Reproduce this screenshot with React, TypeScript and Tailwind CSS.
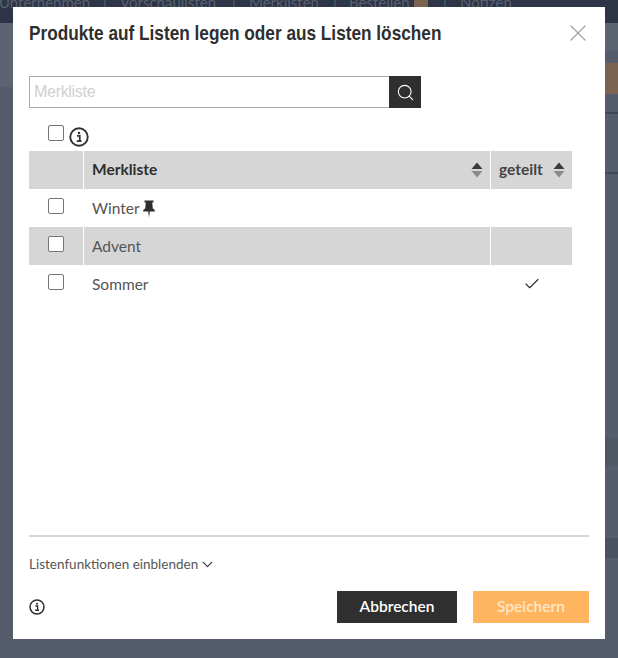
import React from "react";
import { Search, X, Check, ChevronDown } from "lucide-react";

const body = "font-['Lato','Noto_Sans',sans-serif]";

function Info({ size = 16 }: { size?: number }) {
  return (
    <svg width={size} height={size} viewBox="0 0 16 16" fill="none" className="shrink-0">
      <circle cx="8" cy="8" r="7" stroke="#2f2f2f" strokeWidth="1.5" />
      <circle cx="8" cy="4.7" r="1" fill="#2f2f2f" />
      <path d="M6.4 7h2.2v4M6.2 11.3h3.8" stroke="#2f2f2f" strokeWidth="1.4" fill="none" />
    </svg>
  );
}

function Sort() {
  return (
    <svg width="12" height="16" viewBox="0 0 12 16" className="shrink-0">
      <path d="M6 0.5L11.5 7H0.5Z" fill="#3a3a3a" />
      <path d="M6 15.5L11.5 9H0.5Z" fill="#8b8b8b" />
    </svg>
  );
}

function Pin() {
  return (
    <svg width="14" height="18" viewBox="0 0 14 18">
      <path d="M2.5 0.5H11.5V2.5H10.2L10.8 8.5C12 9.2 13 10.2 13 11.5H7.8L7 17.5L6.2 11.5H1C1 10.2 2 9.2 3.2 8.5L3.8 2.5H2.5Z" fill="#2f2f2f" />
    </svg>
  );
}

function Box() {
  return <span className="block w-4 h-4 rounded-[2px] border border-[#767676] bg-white" />;
}

function Row({ name, shaded, pin, shared }: { name: string; shaded?: boolean; pin?: boolean; shared?: boolean }) {
  const bg = shaded ? "bg-[#d6d6d6]" : "bg-white";
  return (
    <div className="flex h-[38px] w-[543px] gap-px text-[#555555] text-[15.5px]">
      <div className={`w-[54px] flex items-center justify-center pb-[5px] pr-px ${bg}`}>
        <Box />
      </div>
      <div className={`flex-1 flex items-center gap-[2px] pl-2 pt-[2px] ${bg}`}>
        <span>{name}</span>
        {pin && <Pin />}
      </div>
      <div className={`w-[81px] flex items-center justify-center ${bg}`}>
        {shared && <Check size={18} strokeWidth={1.5} className="text-[#2f2f2f]" />}
      </div>
    </div>
  );
}

export default function App() {
  return (
    <div className={`relative w-[618px] h-[658px] overflow-hidden bg-[#555c6b] pt-[7px] pl-[13px] ${body}`}>
      {/* Dimmed page behind the dialog */}
      <div className="absolute left-0 top-0 w-full h-[23px] bg-[#2d3546]" />
      <div className="absolute left-0 top-[-8px] w-full h-5 text-[#5a6170] text-[15px] leading-5 whitespace-nowrap">
        <span className="absolute left-[-1px]">Unternehmen</span>
        <span className="absolute left-[103px]">|</span>
        <span className="absolute left-[120px]">Vorschaulisten</span>
        <span className="absolute left-[232px]">|</span>
        <span className="absolute left-[249px]">Merklisten</span>
        <span className="absolute left-[333px]">|</span>
        <span className="absolute left-[349px]">Bestellen</span>
        <span className="absolute left-[443px]">|</span>
        <span className="absolute left-[460px]">Notizen</span>
      </div>
      <div className="absolute left-[414px] top-0 w-[14px] h-2 bg-[#7a644f]" />
      <div className="absolute left-0 top-[23px] w-[13px] h-[64px] bg-[#5c6371]" />
      <div className="absolute left-[605px] top-[23px] w-[13px] h-[27px] bg-[#5c6371]" />
      <div className="absolute left-[605px] top-[63px] w-[13px] h-[31px] bg-[#7a644f]" />
      <div className="absolute left-[605px] top-[112px] w-[13px] h-[2px] bg-[#3f4656]" />
      <div className="absolute left-[605px] top-[172px] w-[13px] h-[2px] bg-[#3f4656]" />
      <div className="absolute left-[605px] top-[438px] w-[13px] h-[28px] bg-[#4f5664]" />
      <div className="absolute left-[605px] top-[538px] w-[13px] h-[20px] bg-[#4a5160]" />

      {/* Dialog */}
      <div className="relative flex flex-col w-[592px] h-[632px] bg-white pl-4 pr-4">
        <div className="flex items-start justify-between pt-[12px] h-[69px]">
          <h1 className="font-['Liberation_Sans',sans-serif] font-bold text-[21px] leading-[28px] text-[#2f2f2f] whitespace-nowrap origin-left scale-x-[0.82]">
            Produkte auf Listen legen oder aus Listen löschen
          </h1>
          <X size={28} strokeWidth={1.1} className="text-[#a3a3a3] -mr-[3px] shrink-0" />
        </div>

        <div className="flex w-[392px] h-8">
          <input
            readOnly
            placeholder="Merkliste"
            className="flex-1 min-w-0 h-8 border border-[#a9a9a9] border-r-0 px-1 text-[16px] font-['Liberation_Sans',sans-serif] tracking-[-0.3px] placeholder:text-[#d0d0d0] outline-none"
          />
          <div className="w-8 h-8 bg-[#2f2f2f] flex items-center justify-center">
            <Search size={19} strokeWidth={1.4} className="text-white" />
          </div>
        </div>

        <div className="flex h-[43px] pl-[19px] gap-[5px] pt-[17px]">
          <Box />
          <span className="mt-[2px]"><Info size={20} /></span>
        </div>

        <div className="flex h-[38px] w-[543px] gap-px text-[#2f2f2f] text-[15.5px] font-bold">
          <div className="w-[54px] bg-[#d6d6d6]" />
          <div className="flex-1 flex items-center justify-between pl-2 pr-[7px] bg-[#d6d6d6]">
            <span>Merkliste</span>
            <Sort />
          </div>
          <div className="w-[81px] flex items-center justify-between pl-2 pr-[7px] bg-[#d6d6d6]">
            <span className="text-[#444444]">geteilt</span>
            <Sort />
          </div>
        </div>
        <Row name="Winter" pin />
        <Row name="Advent" shaded />
        <Row name="Sommer" shared />

        <div className="flex-1" />
        <div className="h-[2px] bg-[#d6d6d6]" />
        <div className="flex items-center gap-[1px] h-[20px] mt-[17px] text-[13.5px] text-[#555555]">
          <span>Listenfunktionen einblenden</span>
          <ChevronDown size={17} strokeWidth={1.6} className="text-[#2f2f2f]" />
        </div>
        <div className="flex items-center justify-between mt-[17px] mb-4">
          <Info size={16} />
          <div className="flex gap-4 text-[15.5px] font-semibold">
            <button className="w-[120px] h-8 bg-[#2f2f2f] text-white">Abbrechen</button>
            <button className="w-[116px] h-8 bg-[#ffb55f] text-[#ffe6c8]">Speichern</button>
          </div>
        </div>
      </div>
    </div>
  );
}
